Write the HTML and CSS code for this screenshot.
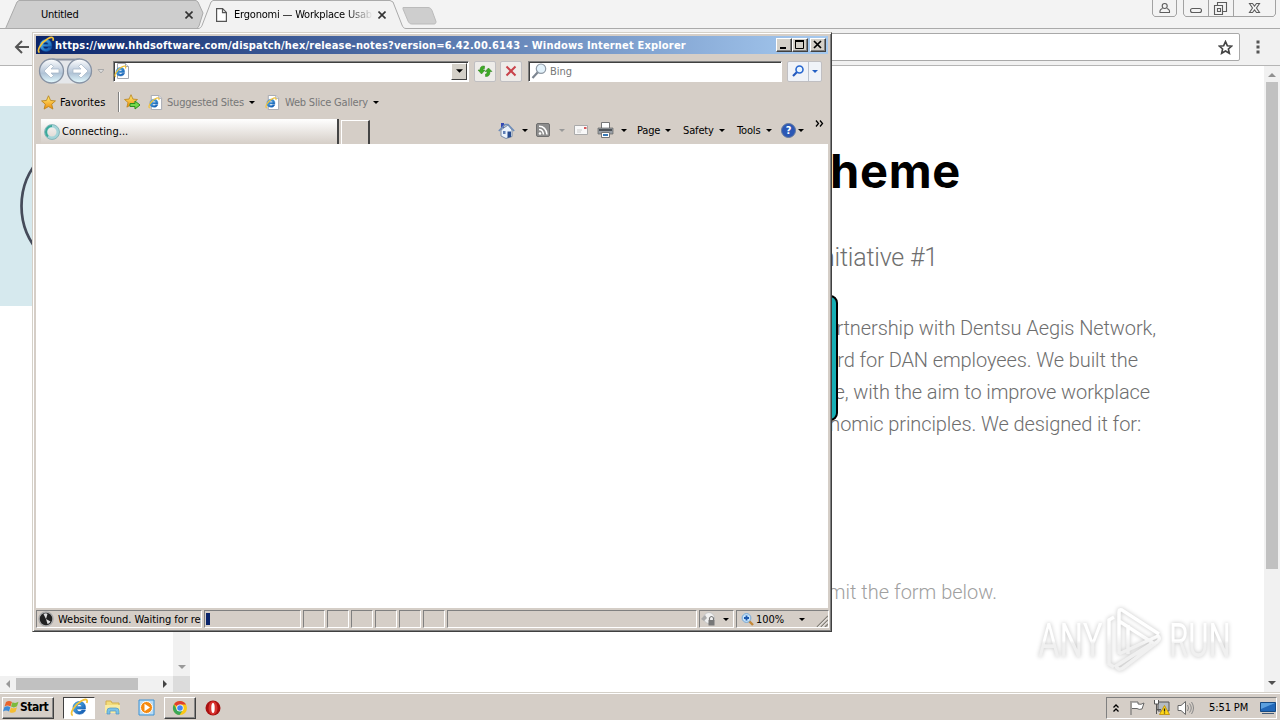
FILE: index.html
```
<!DOCTYPE html>
<html lang="en">
<head>
    <meta charset="UTF-8">
    <title>Ergonomi — Workplace Usability</title>
    <link rel="stylesheet" href="styles.css">
</head>
<body>
    <!-- shared icons -->
    <svg class="defs" width="0" height="0">
        <defs>
            <linearGradient id="blueE" x1="0" y1="0" x2="1" y2="1">
                <stop offset="0" stop-color="#5cc4f4"/><stop offset="1" stop-color="#0a4da8"/>
            </linearGradient>
            <linearGradient id="nav" x1="0" y1="0" x2="0" y2="1">
                <stop offset="0" stop-color="#fff"/><stop offset=".45" stop-color="#c3d0df"/><stop offset=".6" stop-color="#b0c3d6"/><stop offset="1" stop-color="#e4fbff"/>
            </linearGradient>
            <linearGradient id="gold" x1="0" y1="0" x2="0" y2="1">
                <stop offset="0" stop-color="#fff27a"/><stop offset="1" stop-color="#f08a08"/>
            </linearGradient>
            <linearGradient id="tri" x1="0" y1="0" x2="0" y2="1">
                <stop offset=".4" stop-color="#fff"/><stop offset=".6" stop-color="#f0f0f0"/>
            </linearGradient>
            <symbol id="ie" viewBox="0 0 16 16">
                <path d="M13 9.3H5.7c.1 2.5 3.4 2.7 4.3.9h3c-.8 2.2-2.5 3.4-4.9 3.4-3.3 0-5.6-2.1-5.6-5.3C2.500 5.200 4.900 3 8 3c3.400 0 5.400 2.400 5 6.300zM5.800 7.300h4.100c-.2-2.400-3.700-2.400-4.100 0z" fill="url(#blueE)" stroke="#1260b4" stroke-width=".5"/>
                <path d="M2.300 14.700C-.8 13.300 3.500 6 9.500 2.500c3.800-2.200 5.800-1.300 4.600 1.700" fill="none" stroke="#f3c237" stroke-width="1.500"/>
            </symbol>
            <symbol id="iepage" viewBox="0 0 16 16">
                <path d="M3.500.5h8l3 3v12h-11z" fill="#fff" stroke="#a4a8b0"/>
                <path d="M11.500.5v3h3" fill="#e4e8ee" stroke="#a4a8b0"/>
                <use href="#ie" x="0" y="2" width="13" height="13"/>
            </symbol>
            <symbol id="star" viewBox="0 0 16 16">
                <path d="M8 .8l2.200 5 5.200.5-4 3.500 1.300 5.200L8 12.300 3.300 15l1.300-5.200-4-3.500 5.200-.5z" fill="url(#gold)" stroke="#b98218" stroke-width=".9"/>
            </symbol>
            <symbol id="down" viewBox="0 0 6 3"><path d="M0 0h6L3 3z" fill="currentColor"/></symbol>
        </defs>
    </svg>

    <div class="screen">
        <div class="tabstrip">
            <svg class="tabshapes" width="1280" height="30" viewBox="0 0 1280 30">
                <path d="M0 28.500h5l1-1L17 2l2-1.500h177L198 2l5 11-4 13-2 2.500z" fill="#cecece" stroke="#aaa"/>
                <path d="M0 28.500h198c2 0 3-1 4-3L211 2l2-1.500h177l3 1.500 9 23c1 2.500 2 3.500 4 3.500h874V30H0z" fill="#f2f2f2"/>
                <path d="M0 28.500h198c2 0 3-1 4-3L211 2l2-1.500h177l3 1.500 9 23c1 2.500 2 3.500 4 3.500h874" fill="none" stroke="#aaa"/>
                <path d="M403 7.500h25c2 0 3 1 4 3l4 11c0 2-1 2.500-2 2.500h-22c-2 0-3-1-4-3l-5-12z" fill="#cecece" stroke="#bbb"/>
            </svg>
            <span class="tab-title first">Untitled</span>
            <svg class="close" width="8" height="8" viewBox="0 0 8 8"><path d="M.5.5l7 7m0-7l-7 7" stroke="#333" stroke-width="1.600"/></svg>
            <svg class="page" width="11" height="14" viewBox="0 0 11 14"><path d="M.6.600h6l3.800 3.800v9H.600zM6.500.600v4h4" fill="#fff" stroke="#555" stroke-width="1.200"/></svg>
            <span class="tab-title second">Ergonomi — Workplace Usab</span>
            <svg class="close" width="8" height="8" viewBox="0 0 8 8"><path d="M.5.500l7 7m0-7l-7 7" stroke="#333" stroke-width="1.600"/></svg>
            <svg class="winctl" width="125" height="18" viewBox="0 0 125 18">
                <path d="M.5 0v14l2 2.500h20l2-2.500V0M31.500 0v14l2 2.500h88l2-2.500V0M56.500 0v16M81.500 0v16" fill="none" stroke="#a2a2a2"/>
                <g fill="none" stroke="#5c5c5c" stroke-width="1.100">
                    <circle cx="12.700" cy="6" r="2.500"/>
                    <path d="M10.500 8.500q-3 1-2.500 4h9.500q.5-3-2.500-4"/>
                    <rect x="38.500" y="8.500" width="11" height="4" rx="2"/>
                    <path d="M62.500 5.500h8v9h-8zM65.500 8.500h3v3h-3zM65.500 5V2.500h9v9H71"/>
                    <path d="M97.500 3.500h3l2 2.500 2-2.500h3l-3 4.500 3 4.500h-3l-2-2.500-2 2.500h-3l3-4.500z"/>
                </g>
            </svg>
        </div>
        <div class="omnibar">
            <svg class="back" width="16" height="14" viewBox="0 0 16 14"><path d="M15 7H2m6-6L2 7l6 6" fill="none" stroke="#555" stroke-width="2"/></svg>
            <div class="omnibox">
                <svg width="15" height="15" viewBox="0 0 14 14"><path d="M7 1.500l1.700 3.800 4.100.4-3.100 2.700.9 4L7 10.300l-3.600 2.100.9-4-3.100-2.700 4.100-.4z" fill="none" stroke="#444" stroke-width="1.500"/></svg>
            </div>
            <svg class="dots" width="4" height="14" viewBox="0 0 4 14"><path d="M.5.500h3v3h-3zM.5 5.500h3v3h-3zM.5 10.500h3v3h-3z" fill="#555"/></svg>
        </div>

        <div class="viewport">
            <div class="leftpane">
                <div class="leftmain">
                    <div class="banner">
                        <svg width="173" height="200" viewBox="0 0 173 200"><circle cx="91" cy="100" r="69.500" fill="none" stroke="#454b5a" stroke-width="2.700"/></svg>
                    </div>
                    <div class="vbar"><svg width="8" height="4"><use href="#down"/></svg></div>
                </div>
                <div class="hbar">
                    <svg width="4" height="8" viewBox="0 0 4 8"><path d="M4 0v8L0 4z" fill="#999"/></svg>
                    <div class="hthumb"></div>
                    <svg class="right" width="4" height="8" viewBox="0 0 4 8"><path d="M0 0v8l4-4z" fill="#444"/></svg>
                    <div class="corner"></div>
                </div>
            </div>
            <div class="article">
                <h1>Theme</h1>
                <h2>Initiative #1</h2>
                <p>
                    <span class="line l1">in partnership with Dentsu Aegis Network,</span>
                    <span class="line l2">board for DAN employees. We built the</span>
                    <span class="line l3">office, with the aim to improve workplace</span>
                    <span class="line l4">ergonomic principles. We designed it for:</span>
                </p>
                <p class="form-note">submit the form below.</p>
            </div>
            <div class="pagebar">
                <svg width="8" height="5" viewBox="0 0 8 5"><path d="M0 5h8L4 1z" fill="#909090"/></svg>
                <div class="thumb"></div>
                <svg class="last" width="8" height="4"><use href="#down"/></svg>
            </div>
            <div class="teal"></div>
            <div class="watermark">
                <span>ANY</span>
                <svg width="58" height="64" viewBox="0 0 58 64"><path d="M13 46V4q0-3 3-2l37 24M13 13l37 24M22 17v29M13 46l39-18q3 3-1 6L17 60q-5 3-7-2l35-22M8 9L3 12v44l5 3" fill="none" stroke="url(#tri)" stroke-width="3.500"/></svg>
                <span class="run">RUN</span>
            </div>
        </div>

        <div class="taskbar">
            <div class="start">
                <svg width="17" height="16" viewBox="0 0 17 16"><path d="M3 3q3-2 6 0L7.500 7.500q-3-2-6 0z" fill="#e8642c"/><path d="M9.500 3.300q3 1.500 6-.5L14 7.300q-3 2-6 .3z" fill="#7dba3c"/><path d="M1.300 8.200q3-2 6 0L6 12.500q-3-2-6 0z" fill="#3c8bd8"/><path d="M8 8.400q3 2 6-.2l-1.500 4.500q-3 2-6 .2z" fill="#f5bd32"/></svg>
                <span>Start</span>
            </div>
            <div class="task pressed"><svg width="19" height="19"><use href="#ie"/></svg></div>
            <div class="task plain">
                <svg width="18" height="17" viewBox="0 0 18 17"><path d="M2 2h5l1 2h7v9H2z" fill="#f3dc7a" stroke="#d2ad4c"/><path d="M1 6h15v8H1z" fill="#f9eba2"/><path d="M3 15v-3q0-3 3-3h6q3 0 3 3v3h-3v-3H6v3z" fill="#7bc2e8" stroke="#4d96c2" stroke-width=".7"/></svg>
            </div>
            <div class="task plain media">
                <svg width="17" height="17" viewBox="0 0 17 17"><path d="M1 1h15v15H1z" fill="#b9dcf5" stroke="#3d92d4"/><circle cx="8.500" cy="8.500" r="6" fill="#f58a10" stroke="#fff"/><path d="M6.500 4.800v7.400l5.500-3.700z" fill="#fff"/></svg>
            </div>
            <div class="task raised">
                <svg width="16" height="16" viewBox="0 0 16 16"><circle cx="8" cy="8" r="7" fill="#fbc815"/><path d="M8 8L2 4.200A7 7 0 0 1 14 4.500H8z" fill="#df3e31"/><path d="M2 4.200A7 7 0 0 0 7.500 15L11 10 5 10z" fill="#3aa757"/><circle cx="8" cy="8" r="3.600" fill="#fff"/><circle cx="8" cy="8" r="2.800" fill="#4286f4"/></svg>
            </div>
            <div class="task plain opera">
                <svg width="16" height="16" viewBox="0 0 16 16"><circle cx="8" cy="8" r="7.500" fill="#a81010"/><ellipse cx="8" cy="8" rx="4.500" ry="6.800" fill="#d8332f"/><ellipse cx="8" cy="8" rx="1.700" ry="5" fill="#fff"/></svg>
            </div>
            <div class="tray">
                <svg class="chev" width="6" height="8" viewBox="0 0 6 8"><path d="M.5 3.500L3 1l2.500 2.500M.5 7.500L3 5l2.500 2.500" fill="none" stroke="#000" stroke-width="1.300"/></svg>
                <svg class="flag" width="16" height="16" viewBox="0 0 16 16"><path d="M2 1v14M3 2h6v2q3 1 6-1l-2 6q-3 1-5-.5H3" fill="#fff" stroke="#666"/></svg>
                <svg class="net" width="17" height="17" viewBox="0 0 17 17"><path d="M5 3h11v9H5z" fill="#b5bbc1" stroke="#555"/><path d="M1.500 1v4h4V1M3.500 5v10M3.500 10.500H8" fill="#fff" stroke="#555"/><path d="M11.500 6.500l5 9h-10z" fill="#ffd916" stroke="#bb8c00" stroke-width=".8"/><path d="M11.500 9.500v3M11.500 13.500v1" stroke="#222" stroke-width="1.300"/></svg>
                <svg class="sound" width="17" height="16" viewBox="0 0 17 16"><path d="M1 5.500h3L8.500 1.500v13L4 10.500H1z" fill="#fff" stroke="#666"/><path d="M10.500 5q2 3 0 6M12.500 3.500q3.500 4.500 0 9M14.500 2q4 6 0 12" fill="none" stroke="#888"/></svg>
                <span class="clock">5:51 PM</span>
                <svg width="16" height="14" viewBox="0 0 16 14"><path d="M.5 1.500h15v9H.500z" fill="#2268b8" stroke="#164a82"/><path d="M1 2h14L1 8z" fill="#5ba0df"/><path d="M2 12.500h12" stroke="#435c78"/></svg>
            </div>
        </div>
    </div>

    <div class="window">
        <div class="titlebar">
            <svg width="18" height="18"><use href="#ie"/></svg>
            <span>https://www.hhdsoftware.com/dispatch/hex/release-notes?version=6.42.00.6143 - Windows Internet Explorer</span>
            <div class="sysbtn"><svg width="16" height="12" viewBox="0 0 16 12"><path d="M4 9h6" stroke="#000" stroke-width="2"/></svg></div>
            <div class="sysbtn"><svg width="16" height="12" viewBox="0 0 16 12"><path d="M3.500 2v7.500h8V2M3 2h9" fill="none" stroke="#000"/><path d="M3 2h9" stroke="#000" stroke-width="2"/></svg></div>
            <div class="sysbtn x"><svg width="16" height="12" viewBox="0 0 16 12"><path d="M4 2l7 7m0-7l-7 7" stroke="#000" stroke-width="1.700"/></svg></div>
        </div>

        <div class="address-row">
            <svg class="nav" width="66" height="28" viewBox="0 0 66 28">
                <path d="M14 1.500h28q8 0 11 7v12q-4 6-11 6H14z" fill="#e5e7ea"/>
                <path d="M14 2.500h28" stroke="#888f9e" stroke-width="2"/>
                <circle cx="13.500" cy="14" r="12" fill="url(#nav)" stroke="#8792a3" stroke-width="1.300"/>
                <circle cx="41.500" cy="14" r="12" fill="url(#nav)" stroke="#8792a3" stroke-width="1.300"/>
                <path d="M6 14l7-7 2.500 2.500-2.500 2.500h8v4h-8l2.500 2.500L13 21zM50 14l-7-7-2.500 2.500 2.500 2.500h-8v4h8l-2.500 2.500L43 21z" fill="#fff" stroke="#a3b4c5" stroke-width=".7"/>
                <path d="M60 12.500h6l-3 3.500z" fill="#ddd" stroke="#aaa"/>
            </svg>
            <div class="address">
                <svg width="16" height="16"><use href="#iepage"/></svg>
                <div class="combo"><svg width="7" height="4"><use href="#down"/></svg></div>
            </div>
            <div class="tool refresh"><svg width="16" height="16" viewBox="0 0 16 16"><path d="M7.500 3Q3 2.500 3 7H1l3.500 4L8 7H5.800q0-1.500 1.700-1.500zM8.500 13.500q4.500.5 4.500-5h2L11.500 5 8 8.500h2.200q0 2.500-1.700 2.500z" fill="#3daa25" stroke="#2d7e1d" stroke-width=".5"/></svg></div>
            <div class="tool stop"><svg width="12" height="12" viewBox="0 0 12 12"><path d="M1.500 1.500l9 9m0-9l-9 9" stroke="#c9434b" stroke-width="2"/></svg></div>
            <div class="search">
                <svg width="16" height="16" viewBox="0 0 16 16"><path d="M1.500 15L7 9" stroke="#7c8590" stroke-width="2.200"/><circle cx="10" cy="5.700" r="4.700" fill="#e3f2fb" stroke="#8e99a5" stroke-width="1.200"/></svg>
                <span>Bing</span>
            </div>
            <div class="tool go">
                <div><svg width="12" height="12" viewBox="0 0 12 12"><path d="M1 11l4-4" stroke="#2458bd" stroke-width="2.200"/><circle cx="7.500" cy="4.500" r="3.500" fill="#e9f5ff" stroke="#2866cf" stroke-width="1.600"/></svg></div>
                <div class="godown"><svg width="6" height="3"><use href="#down"/></svg></div>
            </div>
        </div>

        <div class="favorites-row">
            <svg width="15" height="15"><use href="#star"/></svg>
            <span class="fav">Favorites</span>
            <i class="sep"></i>
            <svg width="17" height="16" viewBox="0 0 17 16"><use href="#star" width="14" height="14"/><path d="M6 9.500h5V7l5 4-5 4v-2.500H6z" fill="#74d84b" stroke="#2c8e1d"/></svg>
            <svg class="site" width="15" height="15"><use href="#iepage"/></svg>
            <span class="link suggested">Suggested Sites</span>
            <svg width="6" height="3"><use href="#down"/></svg>
            <svg class="slice" width="15" height="15"><use href="#iepage"/></svg>
            <span class="link gallery">Web Slice Gallery</span>
            <svg width="6" height="3"><use href="#down"/></svg>
        </div>

        <div class="tabs-row">
            <div class="ietab">
                <svg width="16" height="16" viewBox="0 0 16 16"><circle cx="8" cy="8" r="6" fill="none" stroke="#a4d4d8" stroke-width="3"/><path d="M8 2a6 6 0 0 0-6 6q0 3 2 4.500" fill="none" stroke="#3ba999" stroke-width="2"/><circle cx="8" cy="8" r="7.500" fill="none" stroke="#609da5" stroke-width=".6"/></svg>
                <span>Connecting...</span>
            </div>
            <div class="newtab"></div>
            <div class="commands">
                <svg class="home" width="17" height="17" viewBox="0 0 17 17"><path d="M3 1h3v5H3z" fill="#3348b4"/><path d="M3 8v6l5 2.500 6-2V8L10 3z" fill="#eaf2fb" stroke="#7b8ca5"/><path d="M.8 9L7 2.500h3L16.200 9" fill="none" stroke="#6d8dba" stroke-width="1.500"/><path d="M9.500 9.500h3.500V15l-3.500 1z" fill="#264b8f"/><path d="M5 9h2.500v3H5z" fill="#5f7fb5"/></svg>
                <svg class="d1" width="6" height="3"><use href="#down"/></svg>
                <svg class="rss" width="14" height="14" viewBox="0 0 14 14"><rect x=".5" y=".5" width="13" height="13" rx="1.500" fill="#8d8d8d" stroke="#6e6e6e"/><circle cx="4" cy="10.500" r="1.300" fill="#fff"/><path d="M3 6.500q4 0 4.500 5M3 3.200q7 0 8 8.300" fill="none" stroke="#fff" stroke-width="1.500"/></svg>
                <svg class="d2" width="6" height="3"><use href="#down"/></svg>
                <svg class="mail" width="15" height="12" viewBox="0 0 15 12"><path d="M.5 1.500h13v9H.500z" fill="#f8f8f8" stroke="#aaa"/><path d="M10 3h2.500v2H10z" fill="#d8595a"/><path d="M3 6h5M3 8h4" stroke="#ccc"/></svg>
                <svg class="print" width="17" height="16" viewBox="0 0 17 16"><path d="M4.500.500h8v6h-8z" fill="#fff" stroke="#777"/><path d="M1 6h15v6H1z" fill="#989ea5" stroke="#666" stroke-width=".7"/><path d="M2 8h13" stroke="#4e5358" stroke-width="2"/><path d="M4.500 10.500h8v5h-8z" fill="#fff" stroke="#777"/><path d="M6 13h5" stroke="#3979b5" stroke-width="2"/></svg>
                <svg class="d3" width="6" height="3"><use href="#down"/></svg>
                <span class="cmd pagecmd">Page</span><svg width="6" height="3"><use href="#down"/></svg>
                <span class="cmd safety">Safety</span><svg width="6" height="3"><use href="#down"/></svg>
                <span class="cmd tools">Tools</span><svg width="6" height="3"><use href="#down"/></svg>
                <div class="help">?</div><svg width="6" height="3"><use href="#down"/></svg>
                <svg class="more" width="9" height="7" viewBox="0 0 9 7"><path d="M1 .5l2.500 3L1 6.500M5 .5l2.500 3L5 6.500" fill="none" stroke="#000" stroke-width="1.300"/></svg>
            </div>
        </div>

        <div class="blank"></div>

        <div class="status">
            <div class="cell message">
                <svg width="16" height="16" viewBox="0 0 16 16"><circle cx="8" cy="8" r="7" fill="#222" stroke="#aaa" stroke-width="1.500"/><path d="M8 8L5.500 3Q8 1.500 9.500 3zM8 8l4.500 2.500q-1 2-3 2.500z" fill="#ddd"/></svg>
                <span>Website found. Waiting for re</span>
            </div>
            <div class="cell progress"><i></i></div>
            <div class="cell small"></div>
            <div class="cell small"></div>
            <div class="cell small"></div>
            <div class="cell small"></div>
            <div class="cell small"></div>
            <div class="cell small"></div>
            <div class="cell wide"></div>
            <div class="cell lock">
                <svg width="17" height="16" viewBox="0 0 17 16"><circle cx="9" cy="7" r="5.500" fill="#f1f1f1" stroke="#c4c4c4"/><path d="M1 8l4-4 2 3-3 3z" fill="#aaa"/><path d="M8.500 9h6v5.500h-6z" fill="#777"/><path d="M9.500 9V7q2-3 4 0v2" fill="none" stroke="#777" stroke-width="1.200"/></svg>
                <svg width="6" height="3"><use href="#down"/></svg>
            </div>
            <div class="cell zoom">
                <svg width="13" height="13" viewBox="0 0 13 13"><path d="M8 8l4 4" stroke="#c48736" stroke-width="2.400"/><circle cx="5.500" cy="5" r="4.400" fill="#c4e2fa" stroke="#76a7d5"/><path d="M5.500 2.500v5M3 5h5" stroke="#1d59ae" stroke-width="1.800"/></svg>
                <span>100%</span>
                <svg class="zdown" width="6" height="3"><use href="#down"/></svg>
                <svg class="grip" width="12" height="12" viewBox="0 0 12 12"><path d="M1 12L12 1M5 12l7-7M9 12l3-3" stroke="#858179" stroke-width="1.400"/><path d="M2.300 12L12 2.300M6.300 12L12 6.300" stroke="#fff" stroke-width=".8"/></svg>
            </div>
        </div>
    </div>
</body>
</html>
```
FILE: styles.css
```
* {
    box-sizing: border-box;
}
body {
    margin: 0;
    width: 1280px;
    height: 720px;
    overflow: hidden;
    font-family: "DejaVu Sans Condensed", "DejaVu Sans", sans-serif;
    font-size: 11px;
    color: #000;
    background: #fff;
}
svg {
    display: block;
    flex: none;
}
span {
    white-space: nowrap;
}
.defs {
    position: absolute;
}
.screen {
    display: flex;
    flex-direction: column;
    height: 720px;
}

/* Chrome */
.tabstrip {
    position: relative;
    display: flex;
    align-items: center;
    height: 29px;
    background: #f3f3f3;
}
.tabshapes {
    position: absolute;
    left: 0;
    top: 0;
}
.tab-title,
.close,
.page,
.winctl {
    position: relative;
}
.tab-title {
    letter-spacing: -0.2px;
}
.first {
    width: 144px;
    margin-left: 41px;
}
.page {
    margin-left: 23px;
}
.second {
    width: 139px;
    margin-left: 7px;
    margin-right: 5px;
    -webkit-mask-image: linear-gradient(to right, #000 112px, transparent 139px);
    mask-image: linear-gradient(to right, #000 112px, transparent 139px);
}
.winctl {
    align-self: flex-start;
    margin-left: auto;
    margin-right: 3px;
}
.omnibar {
    display: flex;
    align-items: center;
    height: 37px;
    background: #f1f1f1;
    border-bottom: 1px solid #b5b5b5;
}
.back {
    margin-left: 14px;
}
.omnibox {
    display: flex;
    align-items: center;
    justify-content: flex-end;
    width: 1170px;
    height: 28px;
    margin-left: 40px;
    padding-right: 6px;
    background: #fff;
    border: 1px solid #a9a9a9;
    border-radius: 2px;
}
.dots {
    margin-left: 16px;
}

/* page */
.viewport {
    position: relative;
    display: flex;
    height: 626px;
    background: #fff;
}
.leftpane {
    display: flex;
    flex-direction: column;
    width: 190px;
}
.leftmain {
    display: flex;
    flex: 1;
}
.banner {
    width: 173px;
    height: 200px;
    margin-top: 40px;
    background: #d6e9ee;
}
.vbar {
    display: flex;
    align-items: flex-end;
    justify-content: center;
    width: 17px;
    padding-bottom: 7px;
    color: #999;
    background: #f1f1f1;
}
.hbar {
    display: flex;
    align-items: center;
    height: 16px;
    padding-left: 6px;
    background: #f1f1f1;
}
.hthumb {
    width: 122px;
    height: 12px;
    margin-left: 6px;
    background: #c1c1c1;
}
.right {
    margin-left: 25px;
}
.corner {
    width: 17px;
    height: 16px;
    margin-left: auto;
    background: #dcdcdc;
}
.article {
    width: 1074px;
    font-family: Roboto, sans-serif;
    font-weight: 300;
    color: #6e6e6e;
}
h1 {
    width: 771px;
    margin: 75px 0 0;
    font-family: Inter, sans-serif;
    font-size: 47px;
    font-weight: 700;
    line-height: 60px;
    color: #000;
    text-align: right;
    letter-spacing: 0.7px;
}
h2 {
    width: 748px;
    margin: 41px 0 0;
    font-size: 25px;
    font-weight: 300;
    line-height: 32px;
    text-align: right;
    letter-spacing: -0.2px;
}
p {
    margin: 38px 0 0;
    font-size: 20px;
    line-height: 32px;
}
.line {
    display: block;
    text-align: right;
    letter-spacing: -0.1px;
}
.l1 {
    width: 966px;
}
.l2 {
    width: 948px;
}
.l3 {
    width: 960px;
}
.l4 {
    width: 951px;
}
.form-note {
    width: 807px;
    margin-top: 136px;
    text-align: right;
    color: #a0a0a0;
}
.pagebar {
    display: flex;
    flex-direction: column;
    align-items: center;
    width: 16px;
    padding: 6px 0 7px;
    background: #f1f1f1;
    color: #505050;
}
.thumb {
    width: 12px;
    height: 487px;
    margin-top: 5px;
    background: #c1c1c1;
}
.last {
    margin-top: auto;
}
.teal {
    position: absolute;
    left: 700px;
    top: 229px;
    width: 138px;
    height: 126px;
    border: 2px solid #000;
    border-radius: 8px;
    background: #17aeb5;
}
.watermark {
    position: absolute;
    left: 1038px;
    top: 541px;
    display: flex;
    align-items: center;
    height: 66px;
    font-family: Roboto, sans-serif;
    font-size: 48px;
    filter: drop-shadow(0 0 2px #c4c4c4);
}
.watermark span {
    width: 64px;
    color: transparent;
    background: linear-gradient(#fff 50%, #f0f0f0 55%);
    background-clip: text;
    -webkit-background-clip: text;
    width: 93px;
    margin-right: -29px;
    transform: scaleX(0.69);
    transform-origin: left;
}
.watermark svg {
    margin-left: 4px;
}
.watermark .run {
    width: 100px;
    margin-left: 5px;
    transform: scaleX(0.65);
}

/* taskbar */
.taskbar {
    display: flex;
    align-items: center;
    height: 28px;
    padding: 2px 3px 0 2px;
    background: #d5cec7;
    border-top: 1px solid #d4d0c8;
    box-shadow: inset 0 1px #fff;
}
.start,
.task {
    display: flex;
    align-items: center;
    height: 22px;
}
.start,
.raised {
    border: 1px solid;
    border-color: #fff #404040 #404040 #fff;
    box-shadow: inset -1px -1px #888;
}
.start {
    width: 52px;
    font-weight: bold;
    font-size: 12px;
    letter-spacing: -0.5px;
}
.start svg {
    margin-top: -2px;
}
.start span {
    margin-top: -2px;
}
.task {
    justify-content: center;
    width: 32px;
}
.pressed {
    margin-left: 9px;
    background: #fff;
    border: 1px solid;
    border-color: #404040 #fff #fff #404040;
}
.plain {
    margin-left: 2px;
}
.media {
    margin-left: 1px;
}
.raised {
    margin-left: 2px;
}
.opera {
    margin-left: 1px;
}
.tray {
    display: flex;
    align-items: center;
    width: 171px;
    height: 22px;
    margin-left: auto;
    padding-left: 6px;
    border: 1px solid;
    border-color: #808080 #fff #fff #808080;
}
.flag {
    margin-left: 10px;
}
.net {
    margin-left: 8px;
}
.sound {
    margin-left: 7px;
}
.clock {
    width: 51px;
    margin-left: 15px;
    letter-spacing: -0.1px;
}

/* IE window */
.window {
    position: absolute;
    left: 32px;
    top: 32px;
    display: flex;
    flex-direction: column;
    width: 800px;
    height: 600px;
    padding: 3px 2px 2px 3px;
    background: #d5cec7;
    border: 1px solid;
    border-color: #d4d0c8 #404040 #404040 #d4d0c8;
    box-shadow: inset 1px 1px #fff, inset -1px -1px #808080;
}
.titlebar {
    display: flex;
    align-items: center;
    height: 18px;
    padding-left: 1px;
    margin-right: 1px;
    background: linear-gradient(to right, #0a246a, #a6caf0);
    color: #fff;
    font-weight: bold;
}
.titlebar span {
    width: 721px;
    letter-spacing: 0.18px;
}
.sysbtn {
    width: 16px;
    height: 14px;
    background: #d4d0c8;
    border: 1px solid;
    border-color: #fff #404040 #404040 #fff;
    box-shadow: inset -1px -1px #808080;
}
.sysbtn svg {
    margin-left: -1px;
}
.x {
    margin-left: 2px;
}
.address-row,
.favorites-row {
    display: flex;
    align-items: center;
}
.address-row {
    height: 34px;
    padding-left: 2px;
}
.address,
.search {
    display: flex;
    align-items: center;
    height: 21px;
    background: #fff;
    border: 1px solid;
    border-color: #808080 #fff #fff #808080;
    box-shadow: inset 1px 1px #404040;
}
.address {
    width: 356px;
    margin-left: 9px;
}
.combo {
    display: flex;
    align-items: center;
    justify-content: center;
    width: 16px;
    height: 17px;
    margin-left: auto;
    margin-right: 1px;
    background: #d4d0c8;
    border: 1px solid;
    border-color: #fff #404040 #404040 #fff;
}
.tool {
    display: flex;
    align-items: center;
    justify-content: center;
    width: 22px;
    height: 21px;
    background: #eeece9;
    border: 1px solid #c0bfc2;
    border-radius: 2px;
}
.refresh {
    margin-left: 5px;
}
.stop {
    margin-left: 4px;
}
.search {
    width: 254px;
    margin-left: 6px;
    padding-left: 2px;
    color: #777;
}
.search span {
    margin-left: 3px;
}
.go {
    width: 35px;
    margin-left: 5px;
    background: #f0f3f8;
}
.go > div {
    display: flex;
    align-items: center;
    justify-content: center;
    flex: 1;
    height: 19px;
}
.go .godown {
    flex: none;
    width: 13px;
    color: #2460c4;
    border-left: 1px solid #bbc3cf;
}
.favorites-row {
    height: 28px;
    padding-left: 5px;
}
.fav {
    width: 58px;
    margin-left: 4px;
    letter-spacing: 0.1px;
}
.sep {
    width: 2px;
    height: 20px;
    margin-right: 4px;
    background: #808080;
    border-right: 1px solid #fff;
}
.site {
    margin-left: 7px;
}
.link {
    padding-top: 1px;
    color: #777;
    letter-spacing: -0.2px;
}
.suggested {
    width: 82px;
    margin-left: 4px;
}
.slice {
    margin-left: 10px;
}
.gallery {
    width: 88px;
    margin-left: 5px;
}
.tabs-row {
    display: flex;
    align-items: flex-end;
    height: 28px;
}
.ietab {
    display: flex;
    align-items: center;
    width: 298px;
    height: 25px;
    margin-left: 5px;
    padding-left: 3px;
    background: linear-gradient(#fff, #d5cec7);
    border-right: 2px solid #444;
}
.ietab span {
    margin-left: 2px;
    letter-spacing: 0.05px;
}
.newtab {
    width: 29px;
    height: 24px;
    margin-left: 2px;
    border-top: 1px solid #fff;
    border-left: 1px solid #fff;
    border-right: 2px solid #444;
}
.commands {
    display: flex;
    align-items: center;
    height: 28px;
    margin-left: 128px;
}
.d1 {
    margin-left: 7px;
}
.rss {
    margin-left: 8px;
}
.d2 {
    margin-left: 9px;
    color: #999;
}
.mail {
    margin-left: 9px;
}
.print {
    margin-left: 8px;
}
.d3 {
    margin-left: 7px;
}
.cmd {
    letter-spacing: -0.15px;
}
.pagecmd {
    width: 28px;
    margin-left: 10px;
}
.safety {
    width: 36px;
    margin-left: 12px;
}
.tools {
    width: 29px;
    margin-left: 12px;
}
.help {
    width: 15px;
    height: 15px;
    margin-left: 9px;
    margin-right: 2px;
    border: 1px solid #63799f;
    border-radius: 50%;
    background: #2b57b5;
    color: #fff;
    font-weight: bold;
    line-height: 13px;
    text-align: center;
}
.more {
    align-self: flex-start;
    margin: 4px 0 0 11px;
}
.blank {
    flex: 1;
    margin-right: 1px;
    background: #fff;
}
.status {
    display: flex;
    height: 21px;
    padding: 2px 0 1px 0;
}
.cell {
    display: flex;
    align-items: center;
    height: 18px;
    margin-right: 2px;
    border: 1px solid;
    border-color: #808080 #fff #fff #808080;
    overflow: hidden;
}
.message {
    width: 166px;
    padding-left: 1px;
}
.message span {
    width: 144px;
    margin-left: 4px;
    letter-spacing: -0.05px;
}
.progress {
    width: 97px;
    padding-left: 1px;
}
.progress i {
    width: 4px;
    height: 12px;
    background: #0a246a;
}
.small {
    width: 22px;
}
.wide {
    width: 250px;
}
.lock {
    width: 35px;
}
.lock svg + svg {
    margin-left: 6px;
}
.zoom {
    width: 93px;
    margin-right: 0;
    padding-left: 4px;
}
.zoom span {
    width: 30px;
    margin-left: 2px;
    letter-spacing: -0.05px;
}
.zdown {
    margin-left: 13px;
}
.grip {
    align-self: flex-end;
    margin-left: auto;
}
```
